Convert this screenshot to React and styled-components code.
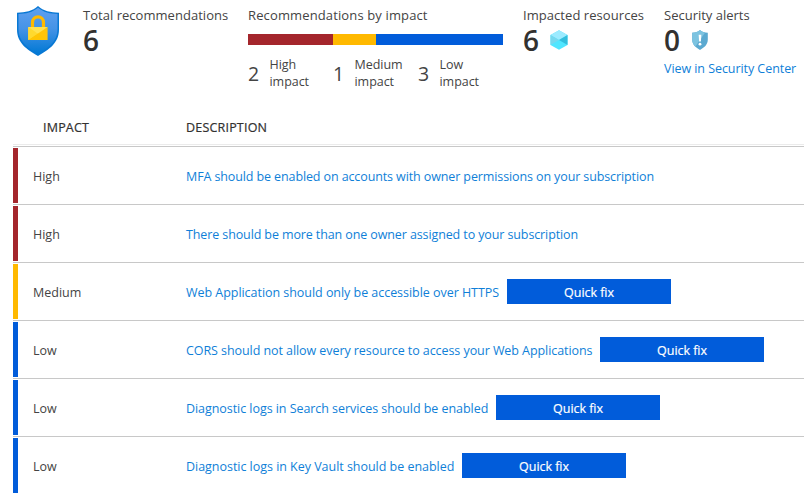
import React from "react";
import styled, { createGlobalStyle } from "styled-components";

const colors = { high: "#a4262c", medium: "#ffb900", low: "#015cda" };

const GlobalStyle = createGlobalStyle`
  *, *::before, *::after { box-sizing: border-box; }
  body {
    margin: 0;
    background: #fff;
    color: #444;
    font-family: "Segoe UI", "Open Sans", sans-serif;
    font-size: 12.5px;
    line-height: 17px;
    overflow: hidden;
  }
`;

const Page = styled.main`
  width: 804px;
  height: 494px;
  overflow: hidden;
  background: #fff;
`;

const Summary = styled.header`
  display: grid;
  grid-template-columns: 66px 165px 275px 141px 140px;
  height: 111px;
  padding: 6px 0 0 17px;
`;

const Stat = styled.section`
  white-space: nowrap;
`;

const StatTitle = styled.h2`
  margin: 1px 0 0;
  font-size: 13px;
  font-weight: 400;
  line-height: 17px;
  letter-spacing: ${(p) => p.$tracking || 0}px;
`;

const StatValue = styled.div`
  display: flex;
  align-items: center;
  gap: 11px;
  height: 32px;
  margin-bottom: 4px;
  color: #323130;
  font-size: 28px;
  font-weight: 600;
  line-height: 32px;
`;

const ImpactBar = styled.div`
  display: grid;
  grid-template-columns: 85px 43px 127px;
  height: 11px;
  margin-top: 10px;
`;

const Segment = styled.span`
  background: ${(p) => colors[p.$level]};
`;

const Legend = styled.div`
  display: flex;
  margin-top: 10px;
`;

const LegendItem = styled.div`
  display: grid;
  grid-template-columns: 21.5px 63.5px;
  align-items: center;
  height: 34px;
`;

const LegendCount = styled.span`
  font-size: 19.5px;
  line-height: 34px;
  padding-top: 2px;
`;

const LegendLabel = styled.span`
  width: 50px;
  white-space: normal;
  letter-spacing: -0.04px;
`;

const Link = styled.a`
  color: #0f7fd8;
  text-decoration: none;
  white-space: nowrap;
  letter-spacing: ${(p) => p.$tracking || 0}px;
`;

const Table = styled.section`
  margin-left: 13px;
`;

const TableHead = styled.div`
  display: grid;
  grid-template-columns: 143px 1fr;
  align-items: center;
  height: 34px;
  padding: 0 0 1px 30px;
  border-bottom: 1px solid #ebebeb;
  margin-bottom: 1px;
  color: #323130;
  font-weight: 500;
  -webkit-text-stroke: 0.2px currentColor;
`;

const HeadCell = styled.span`
  letter-spacing: ${(p) => p.$tracking}px;
`;

const Row = styled.div`
  display: grid;
  grid-template-columns: 5px 168px 1fr;
  height: 58px;
  padding: 1px 0;
  border-top: 1px solid #c8c8c8;
`;

const Stripe = styled.span`
  height: 55px;
  background: ${(p) => colors[p.$level]};
`;

const Impact = styled.span`
  padding-left: 15px;
  line-height: 57px;
`;

const Description = styled.div`
  display: flex;
  align-items: center;
  height: 55px;
`;

const LinkSlot = styled.span`
  flex: none;
  padding-top: 2px;
  width: ${(p) => (p.$width ? `${p.$width}px` : "auto")};
`;

const FixButton = styled.button`
  flex: none;
  width: 164px;
  height: 25px;
  padding: 2px 0 0;
  border: 0;
  background: #015cda;
  color: #fff;
  font: 500 12.5px/23px "Segoe UI", "Open Sans", sans-serif;
  letter-spacing: -0.05px;
  -webkit-text-stroke: 0.2px currentColor;
`;

function LockShield() {
  return (
    <svg width="42" height="50" viewBox="0 0 42 50" aria-hidden="true">
      <defs>
        <linearGradient id="shieldFill" x1="0" y1="0" x2="0" y2="1">
          <stop offset="0" stopColor="#5ea0ef" />
          <stop offset=".45" stopColor="#4593e6" />
          <stop offset="1" stopColor="#0078d4" />
        </linearGradient>
      </defs>
      <path
        d="M21 0C15.500 5 8.500 6.600 0 6.700V23.500C0 37 10 43.500 21 50 32 43.500 42 37 42 23.500V6.700C33.500 6.600 26.500 5 21 0Z"
        fill="#0878d4"
      />
      <path
        d="M21 1.800C15.500 6.300 9 7.900 1.500 8V23.500C1.500 35.500 11 42 21 48 31 42 40.500 35.500 40.500 23.500V8C33 7.900 26.500 6.300 21 1.800Z"
        fill="url(#shieldFill)"
      />
      <path d="M15.500 22V16.500a5.500 5.700 0 0 1 11 0V22" fill="none" stroke="#ffb900" strokeWidth="3.200" />
      <rect x="11.400" y="21" width="19.200" height="13" rx=".6" fill="#ffc40a" />
      <path d="M11.400 21H30.600L11.400 34Z" fill="#ffe252" />
      <path d="M11.400 21L21 27.700 11.400 34Z" fill="#ffd92e" />
      <path d="M11.400 34L21 27.500 30.600 34Z" fill="#ffc505" />
    </svg>
  );
}

function CubeIcon() {
  return (
    <svg width="18" height="20" viewBox="0 0 18 20" aria-hidden="true">
      <path d="M9 .2L17.500 5V15L9 19.800.500 15V5Z" fill="#50e6ff" />
      <path d="M9 .2L17.500 5 9 10 .500 5Z" fill="#9cebff" />
      <path d="M.500 5L9 10 .500 15Z" fill="#76d8ee" />
      <path d="M17.500 5V15L9 10Z" fill="#32bedd" />
    </svg>
  );
}

const AlertSvg = styled.svg`
  margin-left: 1px;
`;

function AlertShield() {
  return (
    <AlertSvg width="16" height="20" viewBox="0 0 16 20" aria-hidden="true">
      <path d="M8 0C6 2 3.500 2.700.200 2.800V9.500C.200 15 4 17.500 8 20 12 17.500 15.800 15 15.800 9.500V2.800C12.500 2.700 10 2 8 0Z" fill="#5ba9d0" />
      <path d="M8 0C6 2 3.500 2.700.200 2.800V9.500C.200 12.700 1.500 14.900 3.400 16.600L13.200 2.500C11.200 2.100 9.500 1.500 8 0Z" fill="#7cc3e0" />
      <path d="M6.700 4.800H9.300L8.900 11.500H7.100Z" fill="#fff" />
      <circle cx="8" cy="14.200" r="1.400" fill="#fff" />
    </AlertSvg>
  );
}

const legend = [
  { count: 2, label: "High impact" },
  { count: 1, label: "Medium impact" },
  { count: 3, label: "Low impact" },
];

const rows = [
  { level: "high", impact: "High", text: "MFA should be enabled on accounts with owner permissions on your subscription", tracking: -0.11 },
  { level: "high", impact: "High", text: "There should be more than one owner assigned to your subscription", tracking: -0.11 },
  { level: "medium", impact: "Medium", text: "Web Application should only be accessible over HTTPS", tracking: -0.04, width: 321 },
  { level: "low", impact: "Low", text: "CORS should not allow every resource to access your Web Applications", tracking: -0.07, width: 414 },
  { level: "low", impact: "Low", text: "Diagnostic logs in Search services should be enabled", tracking: -0.055, width: 310 },
  { level: "low", impact: "Low", text: "Diagnostic logs in Key Vault should be enabled", tracking: -0.03, width: 276 },
];

export default function App() {
  return (
    <Page>
      <GlobalStyle />
      <Summary>
        <LockShield />
        <Stat>
          <StatTitle $tracking={0.03}>Total recommendations</StatTitle>
          <StatValue>6</StatValue>
        </Stat>
        <Stat>
          <StatTitle $tracking={0.13}>Recommendations by impact</StatTitle>
          <ImpactBar>
            <Segment $level="high" />
            <Segment $level="medium" />
            <Segment $level="low" />
          </ImpactBar>
          <Legend>
            {legend.map((item) => (
              <LegendItem key={item.label}>
                <LegendCount>{item.count}</LegendCount>
                <LegendLabel>{item.label}</LegendLabel>
              </LegendItem>
            ))}
          </Legend>
        </Stat>
        <Stat>
          <StatTitle $tracking={0.06}>Impacted resources</StatTitle>
          <StatValue>6<CubeIcon /></StatValue>
        </Stat>
        <Stat>
          <StatTitle>Security alerts</StatTitle>
          <StatValue>0<AlertShield /></StatValue>
          <Link $tracking={-0.06}>View in Security Center</Link>
        </Stat>
      </Summary>
      <Table>
        <TableHead>
          <HeadCell $tracking={0.2}>IMPACT</HeadCell>
          <HeadCell $tracking={0.2}>DESCRIPTION</HeadCell>
        </TableHead>
        {rows.map((row) => (
          <Row key={row.text}>
            <Stripe $level={row.level} />
            <Impact>{row.impact}</Impact>
            <Description>
              <LinkSlot $width={row.width}>
                <Link $tracking={row.tracking}>{row.text}</Link>
              </LinkSlot>
              {row.width && <FixButton>Quick fix</FixButton>}
            </Description>
          </Row>
        ))}
      </Table>
    </Page>
  );
}
